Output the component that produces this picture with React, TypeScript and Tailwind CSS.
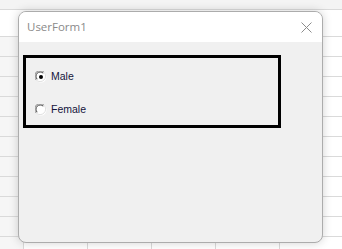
import React from 'react'

const cols = [0, 1, 2, 3, 4, 5]

const SheetRow = ({ h }: { h: number }) => (
  <div className="flex border-b border-[#dadada]" style={{ height: h }}>
    <div className="w-[24px] shrink-0 border-r border-[#dadada] bg-[#f6f6f6]" />
    {cols.map((c) => (
      <div key={c} className="w-[64px] shrink-0 border-r border-[#dadada]" />
    ))}
  </div>
)

const Radio = ({ checked }: { checked?: boolean }) => (
  <svg width="12" height="12" viewBox="0 0 12 12" className="shrink-0">
    <circle cx="6" cy="6" r="5.5" fill="#ffffff" />
    <path d="M1.2 9 A5.2 5.2 0 0 1 9 1.2" stroke="#8a8a8a" strokeWidth="1" fill="none" />
    <path d="M2.2 8.2 A4.2 4.2 0 0 1 8.2 2.2" stroke="#404040" strokeWidth="1" fill="none" />
    <path d="M9 1.2 A5.2 5.2 0 0 1 1.2 9" stroke="#e0e0e0" strokeWidth="1" fill="none" />
    {checked && <circle cx="6" cy="6" r="2" fill="#000000" />}
  </svg>
)

export default function App() {
  return (
    <div className="relative w-[342px] h-[249px] overflow-hidden bg-white">
      {/* spreadsheet behind */}
      <div className="flex flex-col">
        <div className="h-[10px] border-b border-[#dadada] bg-[#f4f4f4]" />
        <div className="h-[27px] border-b border-[#dadada]" />
        {[0, 1, 2, 3, 4, 5, 6, 7, 8, 9, 10].map((r) => (
          <SheetRow key={r} h={20} />
        ))}
      </div>

      {/* UserForm dialog */}
      <div className="absolute left-[18px] top-[11px] w-[305px] h-[232px] rounded-[8px] border border-[#acacac] bg-[#f0f0f0] shadow-[0_0_10px_rgba(0,0,0,0.18)] overflow-hidden flex flex-col">
        <div className="h-[30px] shrink-0 bg-white flex items-center justify-between pl-[8px] pr-[10px]">
          <span className="text-[11.5px] text-[#8a8a8a] font-['Segoe_UI','Open_Sans',sans-serif]">UserForm1</span>
          <svg width="11" height="11" viewBox="0 0 11 11">
            <path d="M0.5 0.5 L10.5 10.5 M10.5 0.5 L0.5 10.5" stroke="#8c8c8c" strokeWidth="1" />
          </svg>
        </div>
        <div className="flex-1 pl-[4px] pt-[13px]">
          <div className="w-[258px] h-[73px] border-[3px] border-black flex flex-col gap-[21px] pl-[9px] pt-[13px] font-['Liberation_Sans',Arial,sans-serif] text-[10.5px] text-[#14143c]">
            <div className="flex items-center gap-[4px] h-[12px]">
              <Radio checked />
              <span>Male</span>
            </div>
            <div className="flex items-center gap-[4px] h-[12px]">
              <Radio />
              <span>Female</span>
            </div>
          </div>
        </div>
      </div>
    </div>
  )
}
